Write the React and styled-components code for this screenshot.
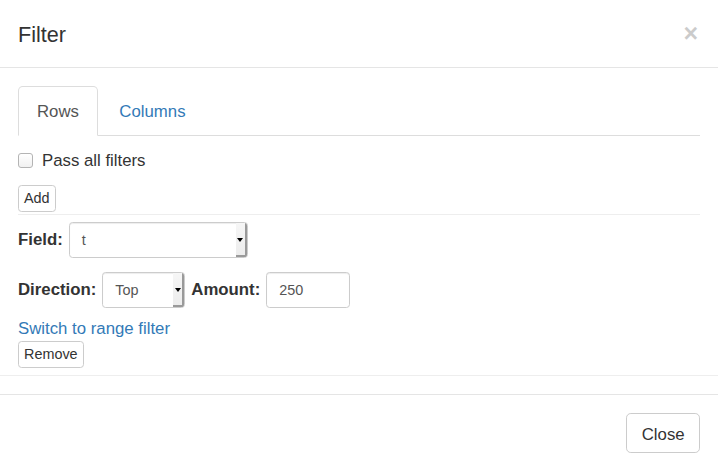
import React from 'react'
import styled, { createGlobalStyle } from 'styled-components'

const GlobalStyle = createGlobalStyle`
    * { box-sizing: border-box; }
    body {
        margin: 0;
        background: #fff;
        font-family: "Liberation Sans", Arial, sans-serif;
        font-size: 16.8px;
        line-height: 24px;
        color: #333;
    }
`

const Modal = styled.div`
    width: 718px;
    height: 471px;
    background: #fff;
    display: flex;
    flex-direction: column;
`

const Header = styled.div`
    display: flex;
    align-items: center;
    justify-content: space-between;
    padding: 19px 18px 17px;
    height: 68px;
    border-bottom: 1px solid #e5e5e5;

    h4 {
        margin: 0;
        font-size: 21.6px;
        font-weight: 500;
        line-height: 31px;
        color: #333;
    }
`

const CloseX = styled.span`
    font-size: 25px;
    font-weight: bold;
    line-height: 1;
    color: #000;
    opacity: 0.2;
    margin-right: 2px;
    margin-top: -2px;
`

const Body = styled.div`
    padding: 18px 18px 7px;
    border-bottom: 1px solid #eee;
`

const Tabs = styled.ul`
    display: flex;
    list-style: none;
    margin: 0;
    padding: 0;
    border-bottom: 1px solid #ddd;
`

const Tab = styled.li`
    margin-bottom: -1px;
    margin-right: 2.4px;
    padding: 13px 18px 11px;
    line-height: 24px;
    border: 1px solid ${p => (p.$active ? '#ddd' : 'transparent')};
    border-bottom-color: ${p => (p.$active ? '#fff' : 'transparent')};
    border-radius: 4.8px 4.8px 0 0;
    background: ${p => (p.$active ? '#fff' : 'transparent')};
    color: ${p => (p.$active ? '#555' : '#337ab7')};
`

const CheckRow = styled.label`
    display: flex;
    align-items: center;
    height: 24px;
    margin-top: 13px;
`

const Check = styled.span`
    width: 15px;
    height: 15px;
    margin-right: 9px;
    margin-top: -1px;
    border: 1px solid #b4b4b4;
    border-radius: 3px;
    background: linear-gradient(#fff, #f1f1f1);
`

const SmallButton = styled.button`
    display: block;
    font-family: inherit;
    font-size: 14.4px;
    line-height: 21.6px;
    padding: 2.2px 5px 1.2px;
    color: #333;
    background: #fff;
    border: 1px solid #ccc;
    border-radius: 3.6px;
`

const AddButton = styled(SmallButton)`
    margin-top: 12px;
`

const FilterItem = styled.div`
    margin-top: 2px;
    border-top: 1px solid #eee;
    padding-top: 7px;
`

const Row = styled.div`
    display: flex;
    align-items: center;
    gap: 6px;
    margin-top: ${p => p.$top || 0}px;
`

const Label = styled.span`
    font-weight: bold;
`

const Select = styled.div`
    display: flex;
    align-items: stretch;
    width: ${p => p.$width}px;
    height: 36px;
    border: 1px solid #ccc;
    border-radius: 3.6px;
    box-shadow: inset 0 1px 1px rgba(0, 0, 0, 0.075);
    background: #fff;
    font-size: 14.4px;
    color: #555;
    overflow: hidden;
`

const SelectValue = styled.span`
    flex: 1;
    display: flex;
    align-items: center;
    padding-left: 12px;
`

const Arrow = styled.span`
    width: 11px;
    display: flex;
    align-items: center;
    justify-content: center;
    background: linear-gradient(#f6f6f6, #ececec);
    box-shadow: inset -2px -2px 0 #9a9a9a;
    padding-right: 2px;

    &::after {
        content: '';
        border-left: 3px solid transparent;
        border-right: 3px solid transparent;
        border-top: 4px solid #000;
    }
`

const Input = styled.div`
    width: ${p => p.$width}px;
    height: 36px;
    display: flex;
    align-items: center;
    padding-left: 12px;
    border: 1px solid #ccc;
    border-radius: 3.6px;
    box-shadow: inset 0 1px 1px rgba(0, 0, 0, 0.075);
    font-size: 14.4px;
    color: #555;
`

const Link = styled.a`
    display: block;
    margin-top: 9px;
    color: #337ab7;
    text-decoration: none;
`

const Footer = styled.div`
    margin-top: 18px;
    border-top: 1px solid #e5e5e5;
    padding: 18px;
    display: flex;
    justify-content: flex-end;
`

const Button = styled.button`
    font-family: inherit;
    font-size: 16.8px;
    line-height: 24px;
    padding: 8.7px 14.4px 5.7px;
    color: #333;
    background: #fff;
    border: 1px solid #ccc;
    border-radius: 4.8px;
`

const App = () => {
    return (
        <>
            <GlobalStyle />
            <Modal>
                <Header>
                    <h4>Filter</h4>
                    <CloseX>×</CloseX>
                </Header>
                <Body>
                    <Tabs>
                        <Tab $active>Rows</Tab>
                        <Tab>Columns</Tab>
                    </Tabs>
                    <CheckRow>
                        <Check />
                        Pass all filters
                    </CheckRow>
                    <AddButton>Add</AddButton>
                    <FilterItem>
                        <Row>
                            <Label>Field:</Label>
                            <Select $width={179}>
                                <SelectValue>t</SelectValue>
                                <Arrow />
                            </Select>
                        </Row>
                        <Row $top={14}>
                            <Label>Direction:</Label>
                            <Select $width={83}>
                                <SelectValue>Top</SelectValue>
                                <Arrow />
                            </Select>
                            <Label>Amount:</Label>
                            <Input $width={84}>250</Input>
                        </Row>
                        <Link href="#">Switch to range filter</Link>
                        <SmallButton>Remove</SmallButton>
                    </FilterItem>
                </Body>
                <Footer>
                    <Button>Close</Button>
                </Footer>
            </Modal>
        </>
    )
}

export default App
